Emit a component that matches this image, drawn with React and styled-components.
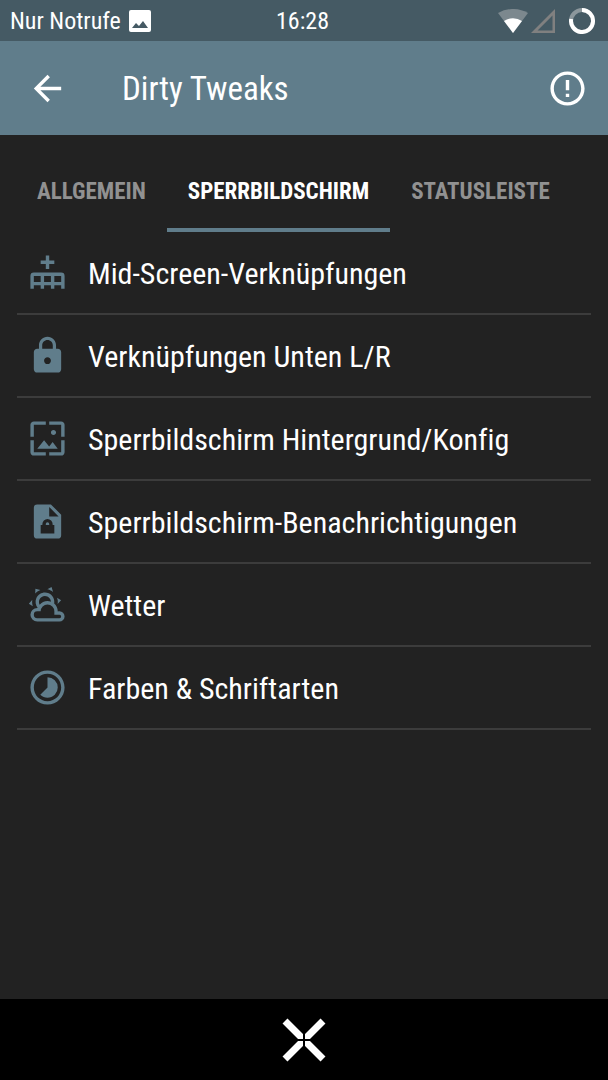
import React, { useState } from 'react'
import styled, { createGlobalStyle } from 'styled-components'
import { MdArrowBack, MdErrorOutline, MdLock, MdTimelapse, MdWallpaper } from 'react-icons/md'

const GlobalStyle = createGlobalStyle`
  * {
    box-sizing: border-box;
  }
  body {
    margin: 0;
    background: #222222;
    color: #ffffff;
    font-family: 'Roboto Condensed', 'Liberation Sans Narrow', Roboto, sans-serif;
  }
  button {
    margin: 0;
    padding: 0;
    border: 0;
    background: none;
    color: inherit;
    font-family: inherit;
    cursor: pointer;
  }
`

const Screen = styled.div`
  display: flex;
  flex-direction: column;
  min-height: 100vh;
`

const StatusBar = styled.div`
  display: grid;
  grid-template-columns: 1fr auto 1fr;
  align-items: center;
  height: 41px;
  padding: 0 13px 0 10px;
  background: #455a64;
  font-size: 24px;
  line-height: 28px;
`

const StatusGroup = styled.div`
  display: flex;
  align-items: center;
  justify-content: ${(props) => (props.$end ? 'flex-end' : 'flex-start')};
  gap: ${(props) => (props.$end ? '3px' : '8px')};
`

const BatteryIcon = styled.svg`
  margin-left: 11px;
`

const AppBar = styled.header`
  display: flex;
  align-items: center;
  height: 94px;
  padding: 0 20px 0 27px;
  background: #607d8b;
`

const IconButton = styled.button`
  display: flex;
  font-size: 41px;
`

const Title = styled.h1`
  flex: 1;
  margin: 0 0 0 54px;
  padding-top: 2px;
  font-size: 33px;
  font-weight: 400;
  line-height: 40px;
`

const Tabs = styled.div`
  display: flex;
  height: 97px;
  padding: 14px 16px 0;
`

const Tab = styled.button`
  && {
    padding: 6px 21px 0;
    border-bottom: 4px solid ${(props) => (props.$active ? '#607d8b' : 'transparent')};
    color: ${(props) => (props.$active ? '#ffffff' : '#919191')};
    font-size: 23px;
    font-weight: 700;
    line-height: 28px;
  }
`

const List = styled.ul`
  flex: 1;
  margin: 0;
  padding: 0 17px;
  list-style: none;
`

const Row = styled.button`
  && {
    display: flex;
    align-items: center;
    gap: 20px;
    width: 100%;
    height: 83px;
    padding: 0 10px;
    border-bottom: 2px solid #3c3c3c;
    font-size: 30px;
    line-height: 36px;
    text-align: left;
  }
`

const RowIcon = styled.span`
  display: flex;
  color: #607d8b;
  font-size: 41px;
`

const RowLabel = styled.span`
  padding-top: 2px;
  font-variant-ligatures: none;
`

const NavBar = styled.nav`
  display: flex;
  align-items: center;
  justify-content: center;
  height: 81px;
  background: #000000;
`

const Glyph = ({ children }) => (
  <svg width="1em" height="1em" viewBox="0 0 24 24" fill="currentColor" aria-hidden="true">
    {children}
  </svg>
)

const ShortcutsIcon = () => (
  <Glyph>
    <path d="M11 2h2v3h3v2h-3v3h-2V7H8V5h3V2z" />
    <path
      fillRule="evenodd"
      d="M4 12h16a2 2 0 0 1 2 2v7.500h-2v-2h-4v2h-2v-2h-4v2H8v-2H4v2H2V14a2 2 0 0 1 2-2zm0 2v3.500h4V14H4zm6 0v3.500h4V14h-4zm6 0v3.500h4V14h-4z"
    />
  </Glyph>
)

const FileLockIcon = () => (
  <Glyph>
    <path
      fillRule="evenodd"
      d="M6 2h8l6 6v12a2 2 0 0 1-2 2H6a2 2 0 0 1-2-2V4a2 2 0 0 1 2-2zm7 1.500V9h5.500L13 3.500zM8 14v5h8v-5h-1v-.500a3 3 0 0 0-6 0v.500H8zm3 0v-.500a1 1 0 0 1 2 0v.500h-2z"
    />
  </Glyph>
)

const WeatherIcon = () => (
  <Glyph>
    <path d="M12.74,5.47C15.1,6.5 16.35,9.03 15.92,11.46C17.19,12.56 18,14.19 18,16V16.17C18.31,16.06 18.65,16 19,16A3,3 0 0,1 22,19A3,3 0 0,1 19,22H6A4,4 0 0,1 2,18A4,4 0 0,1 6,14H6.27C5,12.45 4.6,10.24 5.5,8.26C6.72,5.5 9.97,4.24 12.74,5.47M11.93,7.3C10.16,6.5 8.09,7.31 7.31,9.07C6.85,10.09 6.93,11.22 7.41,12.13C8.5,10.83 10.16,10 12,10C12.7,10 13.38,10.12 14,10.34C13.94,9.06 13.18,7.86 11.93,7.3M13.55,3.64C13,3.4 12.45,3.23 11.88,3.12L14.37,1.82L15.27,4.71C14.76,4.29 14.19,3.93 13.55,3.64M6.09,4.44C5.6,4.79 5.17,5.19 4.8,5.63L4.91,2.82L7.87,3.5C7.25,3.71 6.65,4.03 6.09,4.44M18,9.71C17.91,9.12 17.78,8.55 17.59,8L19.97,9.5L17.92,11.73C18.03,11.08 18.05,10.4 18,9.71M3.04,11.3C3.11,11.9 3.24,12.47 3.43,13L1.06,11.5L3.1,9.28C3,9.93 2.97,10.61 3.04,11.3M19,18H16V16A4,4 0 0,0 12,12A4,4 0 0,0 8,16H6A2,2 0 0,0 4,18A2,2 0 0,0 6,20H19A1,1 0 0,0 20,19A1,1 0 0,0 19,18Z" />
  </Glyph>
)

const tabs = ['ALLGEMEIN', 'SPERRBILDSCHIRM', 'STATUSLEISTE']

const rows = [
  { label: 'Mid-Screen-Verknüpfungen', icon: <ShortcutsIcon /> },
  { label: 'Verknüpfungen Unten L/R', icon: <MdLock /> },
  { label: 'Sperrbildschirm Hintergrund/Konfig', icon: <MdWallpaper /> },
  { label: 'Sperrbildschirm-Benachrichtigungen', icon: <FileLockIcon /> },
  { label: 'Wetter', icon: <WeatherIcon /> },
  { label: 'Farben & Schriftarten', icon: <MdTimelapse /> },
]

const App = () => {
  const [active, setActive] = useState('SPERRBILDSCHIRM')

  return (
    <Screen>
      <GlobalStyle />
      <StatusBar>
        <StatusGroup>
          <span>Nur Notrufe</span>
          <svg width="22" height="22" viewBox="0 0 22 22" aria-hidden="true">
            <path
              fill="#ffffff"
              fillRule="evenodd"
              d="M2 0h18a2 2 0 0 1 2 2v18a2 2 0 0 1-2 2H2a2 2 0 0 1-2-2V2a2 2 0 0 1 2-2zm1 18h16l-5-7-4 5-3-3-4 5z"
            />
          </svg>
        </StatusGroup>
        <time>16:28</time>
        <StatusGroup $end>
          <svg width="30" height="24" viewBox="0 0 30 24" aria-hidden="true">
            <path fill="#7c888e" d="M15 24L0 4a30 30 0 0 1 30 0z" />
            <path fill="#ffffff" d="M15 24L6 12a16 16 0 0 1 18 0z" />
          </svg>
          <svg width="24" height="24" viewBox="0 0 24 24" aria-hidden="true">
            <path fill="#808080" fillRule="evenodd" d="M24 0v24H0zM21.500 6.500v15h-15z" />
          </svg>
          <BatteryIcon width="26" height="26" viewBox="0 0 26 26" fill="none" strokeWidth="4" aria-hidden="true">
            <circle cx="13" cy="13" r="11" stroke="#8c979c" />
            <path d="M13 2a11 11 0 1 1-10.800 9" stroke="#ffffff" />
          </BatteryIcon>
        </StatusGroup>
      </StatusBar>

      <AppBar>
        <IconButton aria-label="Zurück">
          <MdArrowBack />
        </IconButton>
        <Title>Dirty Tweaks</Title>
        <IconButton aria-label="Info">
          <MdErrorOutline />
        </IconButton>
      </AppBar>

      <Tabs role="tablist">
        {tabs.map((tab) => (
          <Tab key={tab} role="tab" aria-selected={tab === active} $active={tab === active} onClick={() => setActive(tab)}>
            {tab}
          </Tab>
        ))}
      </Tabs>

      <List>
        {rows.map((row) => (
          <li key={row.label}>
            <Row>
              <RowIcon>{row.icon}</RowIcon>
              <RowLabel>{row.label}</RowLabel>
            </Row>
          </li>
        ))}
      </List>

      <NavBar>
        <IconButton aria-label="Startseite">
          <svg width="44" height="44" viewBox="0 0 44 44" aria-hidden="true">
            <path stroke="#ffffff" strokeWidth="7" d="M3 3l18 18M41 3L23 21M3 41l18-18M41 41L23 23" />
            <path stroke="#000000" strokeWidth="2" d="M22 14v16M14 22h16" />
          </svg>
        </IconButton>
      </NavBar>
    </Screen>
  )
}

export default App
